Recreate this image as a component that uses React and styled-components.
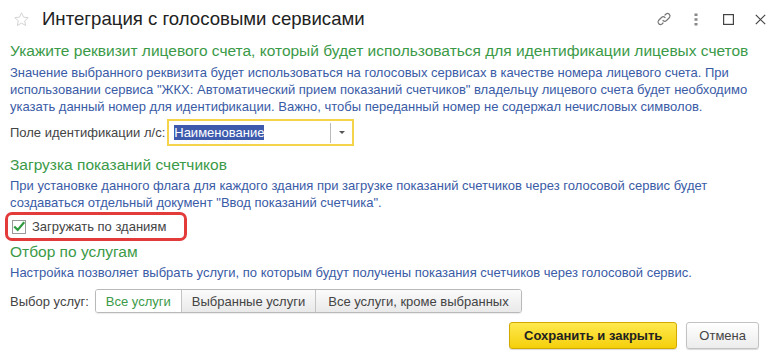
import React from 'react'
import styled, { createGlobalStyle } from 'styled-components'

const GlobalStyle = createGlobalStyle`
  html, body {
    margin: 0;
    padding: 0;
    background: #fff;
  }
  body {
    font-family: 'Liberation Sans', Arial, sans-serif;
    width: 775px;
    height: 361px;
    overflow: hidden;
  }
`

const Window = styled.div`
  display: flex;
  flex-direction: column;
  width: 775px;
  height: 361px;
  box-sizing: border-box;
  background: #fff;
`

const TitleBar = styled.div`
  display: flex;
  align-items: center;
  height: 41px;
  box-sizing: border-box;
  padding: 0 7px 3px 13px;
`

const Star = styled.span`
  display: flex;
  width: 18px;
  margin-right: 11px;
`

const Title = styled.div`
  flex: 1;
  font-size: 18.6px;
  line-height: 22px;
  color: #222;
`

const TitleIcons = styled.div`
  display: flex;
  align-items: center;
  gap: 16px;
`

const IconBtn = styled.span`
  display: flex;
  width: 16px;
  height: 16px;
  align-items: center;
  justify-content: center;
`

const Content = styled.div`
  display: flex;
  flex-direction: column;
  padding: 0 10px;
`

const Heading = styled.div`
  font-size: 15.5px;
  color: #3b9a48;
  line-height: 20px;
  white-space: nowrap;
  margin-top: ${p => p.$top || 0}px;
`

const Note = styled.div`
  font-size: 13px;
  color: #3a5ba6;
  line-height: 17px;
  white-space: nowrap;
  margin-top: ${p => p.$top || 2}px;
`

const FieldRow = styled.div`
  display: flex;
  align-items: center;
  margin-top: ${p => p.$top || 0}px;
`

const Label = styled.span`
  font-size: 13px;
  color: #444;
  margin-right: ${p => p.$gap || 4}px;
`

const SelectBox = styled.div`
  display: flex;
  align-items: center;
  width: 187px;
  height: 27px;
  box-sizing: border-box;
  border: 2px solid #f5d34a;
  background: #fff;
  padding-left: 5px;
`

const Selected = styled.span`
  background: #3d5aad;
  color: #fff;
  font-size: 13px;
  line-height: 15px;
`

const Spacer = styled.div`
  flex: 1;
`

const DropDown = styled.div`
  display: flex;
  align-items: center;
  justify-content: center;
  width: 21px;
  height: 20px;
  border-left: 1px solid #bbb;
`

const Arrow = styled.span`
  width: 0;
  height: 0;
  border-left: 3px solid transparent;
  border-right: 3px solid transparent;
  border-top: 3px solid #555;
`

const Highlight = styled.div`
  display: flex;
  align-items: center;
  align-self: flex-start;
  width: 182px;
  height: 29px;
  box-sizing: border-box;
  margin: 1px 0 0 -5px;
  padding-left: 4px;
  border: 3px solid #e33a3a;
  border-radius: 7px;
`

const Check = styled.span`
  display: flex;
  align-items: center;
  justify-content: center;
  width: 14px;
  height: 14px;
  box-sizing: border-box;
  border: 1px solid #999;
  background: #fff;
  margin-right: 6px;
`

const CheckLabel = styled.span`
  font-size: 13px;
  color: #444;
`

const Segmented = styled.div`
  display: flex;
  height: 24px;
  box-sizing: border-box;
  border: 1px solid #b9b9b9;
  border-radius: 3px;
  overflow: hidden;
  box-shadow: 0 1px 1px rgba(0, 0, 0, 0.08);
`

const Segment = styled.div`
  display: flex;
  align-items: center;
  padding: 0 ${p => p.$pad}px;
  font-size: 13px;
  color: ${p => (p.$active ? '#3b9a48' : '#444')};
  background: ${p => (p.$active ? '#fff' : 'linear-gradient(#fbfbfb, #e9e9e9)')};
  border-left: ${p => (p.$first ? 'none' : '1px solid #c4c4c4')};
`

const Footer = styled.div`
  display: flex;
  justify-content: flex-end;
  gap: 9px;
  padding: 0 16px 0 0;
  margin-top: 9px;
`

const Button = styled.div`
  display: flex;
  align-items: center;
  justify-content: center;
  height: 27px;
  box-sizing: border-box;
  padding: 0 ${p => p.$pad}px;
  font-size: 13px;
  border-radius: 3px;
  border: 1px solid ${p => (p.$primary ? '#d1a900' : '#c2c2c2')};
  background: ${p => (p.$primary ? 'linear-gradient(#ffe94f, #f4cf0b)' : 'linear-gradient(#fff, #ececec)')};
  color: ${p => (p.$primary ? '#222' : '#444')};
  font-weight: ${p => (p.$primary ? 700 : 400)};
  box-shadow: 0 1px 1px rgba(0, 0, 0, 0.15);
`

export default function App () {
  return (
    <Window>
      <GlobalStyle />
      <TitleBar>
        <Star>
          <svg width='17' height='17' viewBox='0 0 24 24' fill='none' stroke='#cfcfcf' strokeWidth='1.3' strokeLinejoin='round'>
            <path d='M12 2.5l2.9 6.2 6.6.7-5 4.5 1.4 6.6L12 17.1l-5.9 3.4 1.4-6.6-5-4.5 6.6-.7z' />
          </svg>
        </Star>
        <Title>Интеграция с голосовыми сервисами</Title>
        <TitleIcons>
          <IconBtn>
            <svg width='16' height='16' viewBox='0 0 16 16' fill='none' stroke='#777' strokeWidth='1.2' strokeLinecap='round'>
              <path d='M7 9.5a2.5 2.5 0 0 0 3.5 0l3-3a2.5 2.5 0 0 0-3.5-3.5l-1 1' />
              <path d='M9 6.5a2.5 2.5 0 0 0-3.5 0l-3 3a2.5 2.5 0 0 0 3.5 3.5l1-1' />
            </svg>
          </IconBtn>
          <IconBtn>
            <svg width='4' height='13' viewBox='0 0 4 13' fill='#888'>
              <rect x='0.5' y='0.5' width='3' height='2.5' />
              <rect x='0.5' y='5.25' width='3' height='2.5' />
              <rect x='0.5' y='10' width='3' height='2.5' />
            </svg>
          </IconBtn>
          <IconBtn>
            <svg width='11' height='11' viewBox='0 0 11 11' fill='none' stroke='#444' strokeWidth='1.2'>
              <rect x='0.6' y='0.6' width='9.8' height='9.8' />
            </svg>
          </IconBtn>
          <IconBtn>
            <svg width='11' height='11' viewBox='0 0 11 11' fill='none' stroke='#444' strokeWidth='1.2'>
              <path d='M0.8 0.8l9.4 9.4M10.2 0.8L0.8 10.2' />
            </svg>
          </IconBtn>
        </TitleIcons>
      </TitleBar>
      <Content>
        <Heading>Укажите реквизит лицевого счета, который будет использоваться для идентификации лицевых счетов</Heading>
        <Note $top={3}>
          Значение выбранного реквизита будет использоваться на голосовых сервисах в качестве номера лицевого счета. При
          <br />
          использовании сервиса "ЖКХ: Автоматический прием показаний счетчиков" владельцу лицевого счета будет необходимо
          <br />
          указать данный номер для идентификации. Важно, чтобы переданный номер не содержал нечисловых символов.
        </Note>
        <FieldRow $top={4}>
          <Label $gap={2}>Поле идентификации л/с:</Label>
          <SelectBox>
            <Selected>Наименование</Selected>
            <Spacer />
            <DropDown><Arrow /></DropDown>
          </SelectBox>
        </FieldRow>
        <Heading $top={9}>Загрузка показаний счетчиков</Heading>
        <Note>
          При установке данного флага для каждого здания при загрузке показаний счетчиков через голосовой сервис будет
          <br />
          создаваться отдельный документ "Ввод показаний счетчика".
        </Note>
        <Highlight>
          <Check>
            <svg width='12' height='12' viewBox='0 0 12 12' fill='none' stroke='#2e9b3e' strokeWidth='2.2' strokeLinecap='square'>
              <path d='M2 6.2l2.7 2.7L10.5 2' />
            </svg>
          </Check>
          <CheckLabel>Загружать по зданиям</CheckLabel>
        </Highlight>
        <Heading $top={1}>Отбор по услугам</Heading>
        <Note>Настройка позволяет выбрать услуги, по которым будут получены показания счетчиков через голосовой сервис.</Note>
        <FieldRow $top={8}>
          <Label $gap={6}>Выбор услуг:</Label>
          <Segmented>
            <Segment $active $first $pad={10}>Все услуги</Segment>
            <Segment $pad={10}>Выбранные услуги</Segment>
            <Segment $pad={12}>Все услуги, кроме выбранных</Segment>
          </Segmented>
        </FieldRow>
      </Content>
      <Footer>
        <Button $primary $pad={14}>Сохранить и закрыть</Button>
        <Button $pad={12}>Отмена</Button>
      </Footer>
    </Window>
  )
}
